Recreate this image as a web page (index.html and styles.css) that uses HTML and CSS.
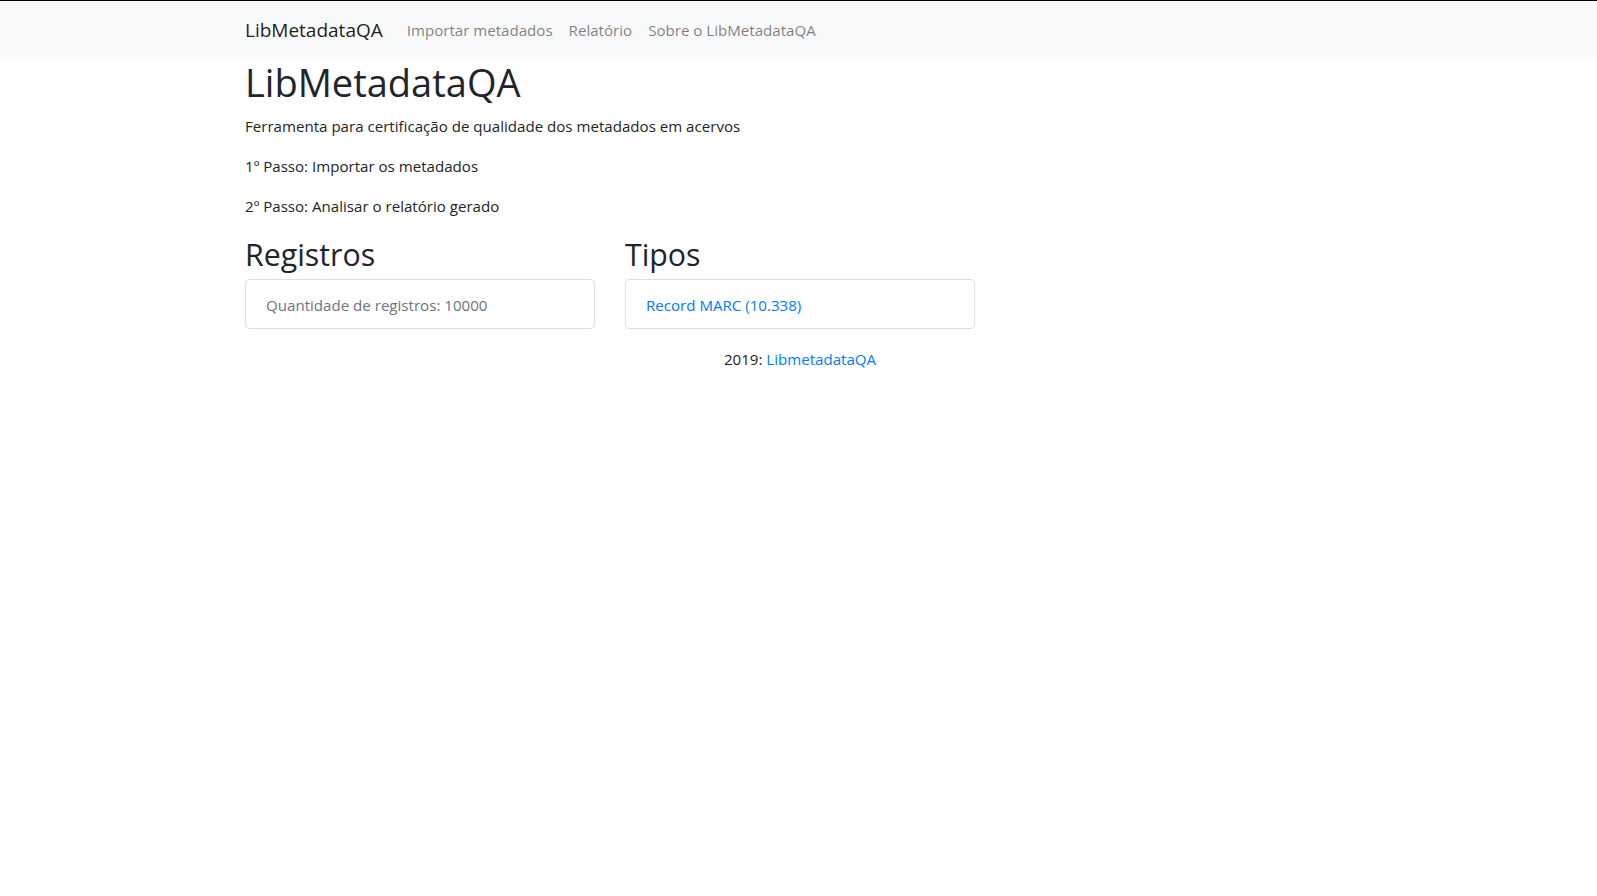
FILE: index.html
```html
<!DOCTYPE html>
<html lang="pt-BR">
<head>
<meta charset="utf-8">
<title>LibMetadataQA</title>
<link rel="stylesheet" href="styles.css">
</head>
<body>
<nav class="navbar">
  <div class="container nav-inner">
    <a class="brand" href="#">LibMetadataQA</a>
    <ul class="nav-links">
      <li><a class="nav-link" href="#">Importar metadados</a></li>
      <li><a class="nav-link" href="#">Relatório</a></li>
      <li><a class="nav-link" href="#">Sobre o LibMetadataQA</a></li>
    </ul>
  </div>
</nav>
<main class="container main">
  <h1 class="title">LibMetadataQA</h1>
  <p class="text">Ferramenta para certificação de qualidade dos metadados em acervos</p>
  <p class="text">1º Passo: Importar os metadados</p>
  <p class="text">2º Passo: Analisar o relatório gerado</p>
  <div class="row">
    <section class="col">
      <h2 class="subtitle">Registros</h2>
      <div class="list-group">
        <div class="list-item muted">Quantidade de registros: 10000</div>
      </div>
    </section>
    <section class="col">
      <h2 class="subtitle">Tipos</h2>
      <div class="list-group">
        <a class="list-item link" href="#">Record MARC (10.338)</a>
      </div>
    </section>
  </div>
  <footer class="footer">2019: <a class="link" href="#">LibmetadataQA</a></footer>
</main>
</body>
</html>
```
FILE: styles.css
```css
* { box-sizing: border-box; }
html, body { margin: 0; padding: 0; }
body {
  font-family: "Open Sans", "Noto Sans", sans-serif;
  font-size: 15.1px;
  line-height: 24px;
  color: #212529;
  background: #fff;
  border-top: 1px solid #000;
}
.container {
  width: 1140px;
  margin: 0 auto;
  padding: 0 13.5px 0 16.5px;
}
.navbar {
  background: #f8f9fa;
  padding: 9px 0 7px;
}
.nav-inner {
  display: flex;
  align-items: center;
}
.brand {
  font-size: 19px;
  line-height: 30px;
  padding: 5px 0;
  margin-right: 16px;
  color: rgba(0,0,0,.9);
  text-decoration: none;
}
.nav-links {
  display: flex;
  list-style: none;
  margin: 0;
  padding: 0;
}
.nav-link {
  display: block;
  padding: 8px;
  color: rgba(0,0,0,.5);
  text-decoration: none;
}
.main { padding-top: 1px; }
.title {
  font-size: 38px;
  font-weight: 500;
  line-height: 48px;
  margin: 0 0 8px;
}
.text { margin: 0 0 16px; }
.row {
  display: flex;
  margin: 0 -15px;
}
.col {
  width: 380px;
  padding: 0 15px;
}
.subtitle {
  font-size: 30.3px;
  font-weight: 500;
  line-height: 38px;
  margin: 0 0 5px;
  padding-top: 2px;
}
.list-group {
  border: 1px solid rgba(0,0,0,.125);
  border-radius: 4px;
}
.list-item {
  display: block;
  padding: 13px 20px 11px;
}
.muted { color: #6c757d; }
.link { color: #007bff; text-decoration: none; }
.footer {
  text-align: center;
  margin-top: 18px;
}
```
